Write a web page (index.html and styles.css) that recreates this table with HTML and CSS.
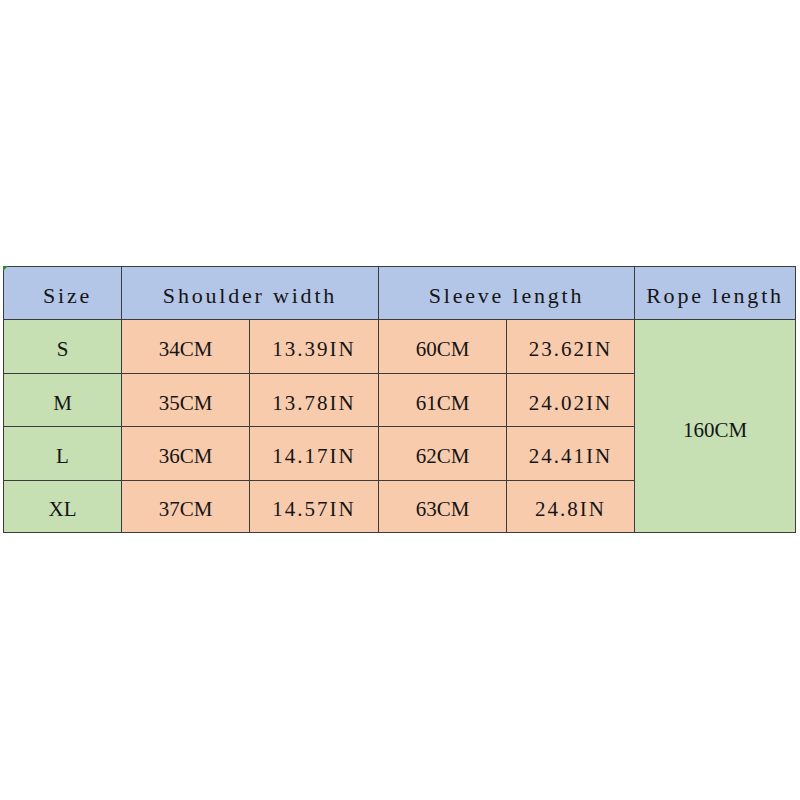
FILE: index.html
```html
<!DOCTYPE html>
<html>
<head>
<meta charset="utf-8">
<link rel="stylesheet" href="styles.css">
</head>
<body>
<div class="page">
  <div class="sheet">
    <div class="cell head size">Size</div>
    <div class="cell head span2">Shoulder width</div>
    <div class="cell head span2">Sleeve length</div>
    <div class="cell head">Rope length</div>

    <div class="cell green">S</div>
    <div class="cell orange cm">34CM</div>
    <div class="cell orange in">13.39IN</div>
    <div class="cell orange cm">60CM</div>
    <div class="cell orange in">23.62IN</div>
    <div class="cell green cm rope">160CM</div>

    <div class="cell green">M</div>
    <div class="cell orange cm">35CM</div>
    <div class="cell orange in">13.78IN</div>
    <div class="cell orange cm">61CM</div>
    <div class="cell orange in">24.02IN</div>

    <div class="cell green">L</div>
    <div class="cell orange cm">36CM</div>
    <div class="cell orange in">14.17IN</div>
    <div class="cell orange cm">62CM</div>
    <div class="cell orange in">24.41IN</div>

    <div class="cell green">XL</div>
    <div class="cell orange cm">37CM</div>
    <div class="cell orange in">14.57IN</div>
    <div class="cell orange cm">63CM</div>
    <div class="cell orange in">24.8IN</div>
  </div>
</div>
</body>
</html>
```

FILE: styles.css
```css
html, body {
  margin: 0;
  padding: 0;
  background: #ffffff;
}

.page {
  padding: 266px 0 0 3px;
}

.sheet {
  position: relative;
  display: grid;
  grid-template-columns: 117px 127px 128px 127px 127px 160px;
  grid-template-rows: 52px 53px 52px 53px 51px;
  gap: 1px;
  padding: 1px;
  width: max-content;
  background: #3c3c3c;
  font-family: "Liberation Serif", "Times New Roman", serif;
  font-size: 21px;
  color: #151515;
}

.sheet::before {
  content: "";
  position: absolute;
  left: 0;
  top: 0;
  width: 0;
  height: 0;
  border-top: 5px solid #2e8b2e;
  border-right: 5px solid transparent;
}

.cell {
  display: flex;
  align-items: center;
  justify-content: center;
  white-space: pre;
  padding-top: 6px;
  box-sizing: border-box;
}

.head {
  background: #b4c6e7;
  font-size: 22px;
  letter-spacing: 2.8px;
}

.size {
  padding-left: 10px;
}

.span2 {
  grid-column: span 2;
}

.green {
  background: #c6e0b4;
}

.orange {
  background: #f8cbad;
}

.cm {
  letter-spacing: 0;
}

.in {
  letter-spacing: 2px;
}

.rope {
  grid-column: 6;
  grid-row: 2 / span 4;
  padding-top: 8px;
}
```
